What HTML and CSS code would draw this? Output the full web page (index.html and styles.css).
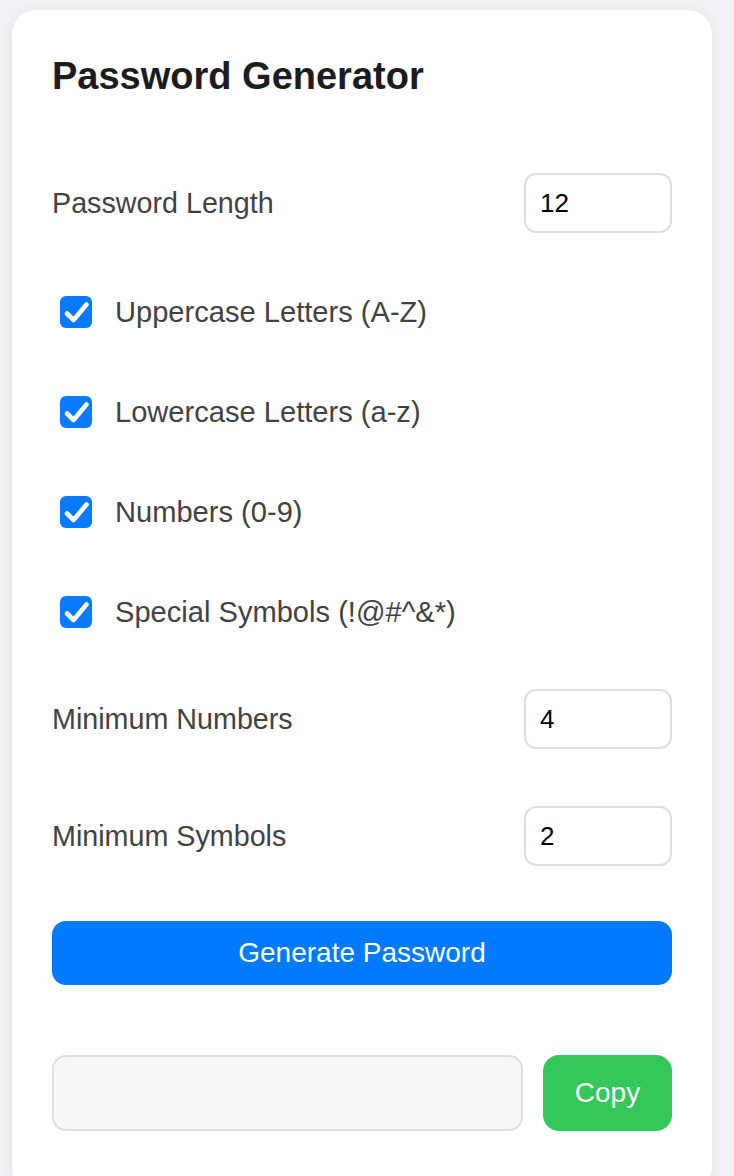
FILE: index.html
```html
<!DOCTYPE html>
<html lang="en">
<head>
<meta charset="utf-8">
<title>Password Generator</title>
<link rel="stylesheet" href="styles.css">
</head>
<body>
<div class="card">
  <h1 class="title">Password Generator</h1>

  <div class="form">
    <div class="field field-length">
      <label class="field-label" for="length">Password Length</label>
      <input class="num-input" id="length" type="text" value="12">
    </div>

    <div class="options">
      <label class="option">
        <span class="check"><svg viewBox="0 0 32 32" width="32" height="32"><path d="M7 17.5 L13.6 24 L26.5 8.5" fill="none" stroke="#fff" stroke-width="4.6" stroke-linecap="round" stroke-linejoin="round"/></svg></span>
        <span class="option-text">Uppercase Letters (A-Z)</span>
      </label>
      <label class="option">
        <span class="check"><svg viewBox="0 0 32 32" width="32" height="32"><path d="M7 17.5 L13.6 24 L26.5 8.5" fill="none" stroke="#fff" stroke-width="4.6" stroke-linecap="round" stroke-linejoin="round"/></svg></span>
        <span class="option-text">Lowercase Letters (a-z)</span>
      </label>
      <label class="option">
        <span class="check"><svg viewBox="0 0 32 32" width="32" height="32"><path d="M7 17.5 L13.6 24 L26.5 8.5" fill="none" stroke="#fff" stroke-width="4.6" stroke-linecap="round" stroke-linejoin="round"/></svg></span>
        <span class="option-text">Numbers (0-9)</span>
      </label>
      <label class="option">
        <span class="check"><svg viewBox="0 0 32 32" width="32" height="32"><path d="M7 17.5 L13.6 24 L26.5 8.5" fill="none" stroke="#fff" stroke-width="4.6" stroke-linecap="round" stroke-linejoin="round"/></svg></span>
        <span class="option-text">Special Symbols (!@#^&amp;*)</span>
      </label>
    </div>

    <div class="field field-min-num">
      <label class="field-label" for="minnum">Minimum Numbers</label>
      <input class="num-input" id="minnum" type="text" value="4">
    </div>

    <div class="field field-min-sym">
      <label class="field-label" for="minsym">Minimum Symbols</label>
      <input class="num-input" id="minsym" type="text" value="2">
    </div>

    <button class="btn-generate" type="button">Generate Password</button>

    <div class="output-row">
      <input class="output" type="text" readonly>
      <button class="btn-copy" type="button">Copy</button>
    </div>
  </div>
</div>
</body>
</html>
```

FILE: styles.css
```css
* {
  box-sizing: border-box;
}

html, body {
  margin: 0;
  padding: 0;
}

body {
  background: #f2f2f6;
  font-family: "Liberation Sans", Arial, Helvetica, sans-serif;
  overflow: hidden;
}

.card {
  width: 700px;
  margin: 10px 0 0 12px;
  padding: 43px 40px 60px;
  background: #ffffff;
  border-radius: 24px;
  box-shadow: 0 2px 14px rgba(0, 0, 0, 0.07);
}

.title {
  margin: 0;
  font-size: 38px;
  line-height: 46px;
  font-weight: 700;
  color: #1c1c1e;
  letter-spacing: 0;
}

.form {
  display: flex;
  flex-direction: column;
}

.field {
  display: flex;
  align-items: center;
  justify-content: space-between;
  height: 60px;
}

.field-length {
  margin-top: 74px;
}

.field-min-num {
  margin-top: 47px;
}

.field-min-sym {
  margin-top: 57px;
}

.field-label {
  font-size: 28.7px;
  color: #424242;
}

.num-input {
  width: 148px;
  height: 60px;
  padding: 0 14px;
  border: 2px solid #dedede;
  border-radius: 12px;
  font-family: "Liberation Sans", Arial, sans-serif;
  font-size: 26px;
  color: #000000;
  background: #ffffff;
  outline: none;
}

.options {
  display: flex;
  flex-direction: column;
  gap: 40px;
  margin-top: 49px;
}

.option {
  display: flex;
  align-items: center;
  height: 60px;
  padding-left: 8px;
}

.check {
  display: flex;
  width: 32px;
  height: 32px;
  border-radius: 6px;
  background: #0a7aff;
  flex: none;
}

.option-text {
  margin-left: 23px;
  font-size: 29.1px;
  color: #424242;
}

.btn-generate {
  margin-top: 55px;
  height: 64px;
  width: 100%;
  border: none;
  border-radius: 14px;
  background: #007aff;
  color: #ffffff;
  font-family: "Liberation Sans", Arial, sans-serif;
  font-size: 28px;
  cursor: pointer;
}

.output-row {
  display: flex;
  gap: 20px;
  margin-top: 70px;
  height: 76px;
}

.output {
  flex: 1;
  height: 76px;
  border: 2px solid #dedede;
  border-radius: 14px;
  background: #f7f7f7;
  outline: none;
}

.btn-copy {
  width: 129px;
  height: 76px;
  border: none;
  border-radius: 16px;
  background: #34c759;
  color: #ffffff;
  font-family: "Liberation Sans", Arial, sans-serif;
  font-size: 28px;
  cursor: pointer;
}
```
